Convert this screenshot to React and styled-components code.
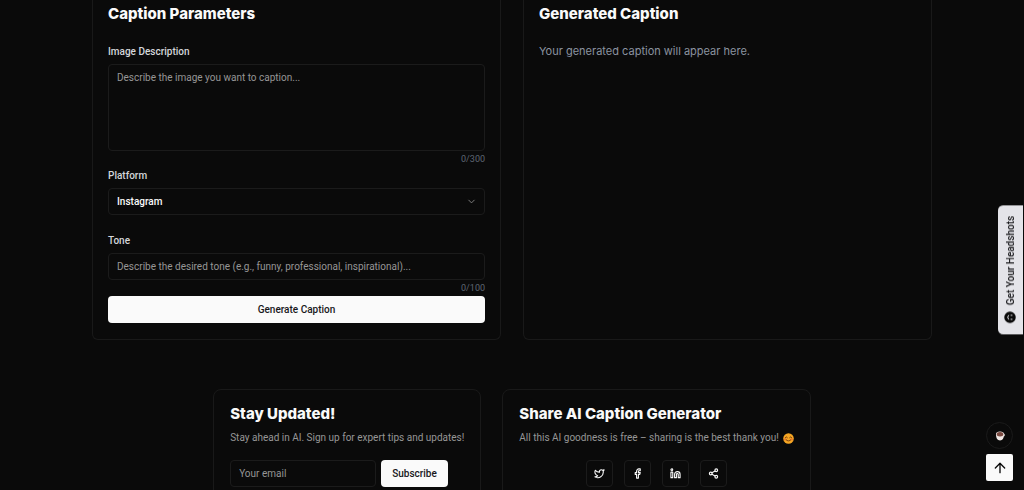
import styled, { createGlobalStyle } from "styled-components";
import { ArrowUp, ChevronDown, Facebook, Linkedin, Share2, Twitter } from "lucide-react";

const GlobalStyle = createGlobalStyle`
* {
  box-sizing: border-box;
}

body {
  margin: 0;
  overflow: hidden;
  background: #0a0a0a;
  color: #fafafa;
  font-family: Roboto, Inter, sans-serif;
  font-size: 10px;
}

h2, p {
  margin: 0;
}

button, input, select, textarea {
  font: inherit;
}
`;

const shareLinks = [
  { name: "Twitter", Icon: Twitter },
  { name: "Facebook", Icon: Facebook },
  { name: "LinkedIn", Icon: Linkedin },
  { name: "Copy link", Icon: Share2 },
];

const Smile = () => (
  <Emoji viewBox="0 0 24 24" role="img" aria-label="smiling face">
    <circle cx="12" cy="12" r="11.5" fill="#f5a623" />
    <g fill="none" stroke="#6b3410" strokeWidth="2" strokeLinecap="round">
      <path d="M5 10q2-3.5 4.5 0M14.5 10q2.5-3.5 4.5 0" />
      <path d="M6.5 14.5q5.500 6 11 0" />
    </g>
    <circle cx="4.5" cy="14" r="2.5" fill="#ee6b2f" opacity="0.7" />
    <circle cx="19.5" cy="14" r="2.5" fill="#ee6b2f" opacity="0.7" />
  </Emoji>
);

const CaptionForm = () => {
  return (
    <Panel as="form" onSubmit={(e) => e.preventDefault()}>
      <Title>Caption Parameters</Title>
      <Fields>
        <Field>
          <Label htmlFor="description">Image Description</Label>
          <TextArea id="description" maxLength={300} placeholder="Describe the image you want to caption..." />
          <Counter>0/300</Counter>
        </Field>
        <Field $space="5px">
          <Label htmlFor="platform">Platform</Label>
          <SelectBox>
            <Select id="platform" defaultValue="Instagram">
              <option>Instagram</option>
              <option>Facebook</option>
              <option>LinkedIn</option>
            </Select>
            <ChevronDown size={11} />
          </SelectBox>
        </Field>
        <Field $space="20px">
          <Label htmlFor="tone">Tone</Label>
          <Input
            id="tone"
            maxLength={100}
            placeholder="Describe the desired tone (e.g., funny, professional, inspirational)..."
          />
          <Counter>0/100</Counter>
        </Field>
        <Button type="submit">Generate Caption</Button>
      </Fields>
    </Panel>
  );
};

const App = () => {
  return (
    <>
      <GlobalStyle />
      <Main>
        <Panels>
          <CaptionForm />
          <Panel>
            <Title>Generated Caption</Title>
            <Result>Your generated caption will appear here.</Result>
          </Panel>
        </Panels>

        <Cards>
          <Card>
            <Title>Stay Updated!</Title>
            <Text>Stay ahead in AI. Sign up for expert tips and updates!</Text>
            <Subscribe onSubmit={(e) => e.preventDefault()}>
              <Input type="email" aria-label="Your email" placeholder="Your email" />
              <Button type="submit">Subscribe</Button>
            </Subscribe>
          </Card>
          <Card>
            <Title>Share AI Caption Generator</Title>
            <Text>
              All this AI goodness is free – sharing is the best thank you! <Smile />
            </Text>
            <ShareRow>
              {shareLinks.map(({ name, Icon }) => (
                <IconButton key={name} type="button" aria-label={name}>
                  <Icon size={11} strokeWidth={2.4} />
                </IconButton>
              ))}
            </ShareRow>
          </Card>
        </Cards>
      </Main>

      <SideTab href="#headshots">
        <svg width="12" height="12" viewBox="0 0 24 24" aria-hidden="true">
          <circle cx="12" cy="12" r="11.5" fill="#0a0a0a" />
          <g fill="none" stroke="#e4e4e9" strokeWidth="2" strokeLinecap="round">
            <path d="M10 8h-2M10 16h-2M15 8q4 4 0 8" />
          </g>
        </svg>
        Get Your Headshots
      </SideTab>

      <Floating>
        <CoffeeLink href="#coffee" aria-label="Buy a coffee">
          <svg width="10" height="10" viewBox="0 0 20 20" aria-hidden="true">
            <path d="M2 6q0 13 8 13t8-13z" fill="#f1e9e6" />
            <circle cx="17.5" cy="8" r="2" fill="none" stroke="#f1e9e6" strokeWidth="1.5" />
            <ellipse cx="10" cy="6" rx="8" ry="5" fill="#f1e9e6" />
            <ellipse cx="10" cy="6.5" rx="6.5" ry="4.5" fill="#7a4a41" />
          </svg>
        </CoffeeLink>
        <TopButton type="button" aria-label="Back to top">
          <ArrowUp size={16} />
        </TopButton>
      </Floating>
    </>
  );
};

const Main = styled.main`
  display: flex;
  flex-direction: column;
  gap: 49px;
`;

const Panels = styled.div`
  display: grid;
  grid-template-columns: 1fr 1fr;
  gap: 22px;
  width: 84%;
  max-width: 840px;
  margin: 0 auto;
`;

const Panel = styled.section`
  padding: 4px 15px 16px;
  border: 1px solid #191919;
  border-top: 0;
  border-radius: 0 0 6px 6px;
`;

const Title = styled.h2`
  font-family: Inter, sans-serif;
  font-size: 15px;
  font-weight: 800;
  line-height: 20px;
`;

const Fields = styled.div`
  display: flex;
  flex-direction: column;
  margin-top: 22px;
`;

const Field = styled.div`
  display: flex;
  flex-direction: column;
  margin-top: ${({ $space }) => $space || 0};
`;

const Label = styled.label`
  margin-bottom: 6px;
  color: #d4d6da;
  font-weight: 500;
  line-height: 12px;
`;

const Input = styled.input`
  width: 100%;
  min-width: 0;
  height: 27px;
  padding: 0 8px;
  border: 1px solid #1b1b1b;
  border-radius: 4px;
  background: transparent;
  color: #fafafa;

  &::placeholder {
    color: #969696;
    opacity: 1;
  }
`;

const TextArea = styled(Input).attrs({ as: "textarea" })`
  display: block;
  height: 87px;
  padding: 6px 8px;
  line-height: 14px;
  resize: none;
`;

const SelectBox = styled.div`
  display: grid;
  align-items: center;

  > * {
    grid-area: 1 / 1;
  }

  svg {
    justify-self: end;
    margin-right: 8px;
    color: #858585;
    pointer-events: none;
  }
`;

const Select = styled(Input).attrs({ as: "select" })`
  appearance: none;
  font-weight: 500;
`;

const Counter = styled.span`
  margin-top: 2px;
  color: #5f6673;
  font-size: 9px;
  line-height: 12px;
  text-align: right;
`;

const Button = styled.button`
  height: 27px;
  padding: 0 11px;
  border: 0;
  border-radius: 4px;
  background: #fafafa;
  color: #18181b;
  font-weight: 500;
  cursor: pointer;

  ${Fields} & {
    margin-top: 2px;
  }
`;

const Result = styled.p`
  margin-top: 19px;
  color: #8b93a0;
  font-family: Inter, sans-serif;
  font-size: 11px;
  line-height: 16px;
`;

const Cards = styled.div`
  display: flex;
  justify-content: center;
  gap: 21px;
`;

const Card = styled.section`
  padding: 14px 16px 16px;
  border: 1px solid #191919;
  border-radius: 8px;
`;

const Text = styled.p`
  display: flex;
  align-items: center;
  gap: 4px;
  margin-top: 7px;
  color: #969696;
  line-height: 14px;
`;

const Emoji = styled.svg`
  width: 11px;
  height: 11px;
`;

const Subscribe = styled.form`
  display: flex;
  gap: 5px;
  margin-top: 15px;

  input {
    width: 146px;
  }
`;

const ShareRow = styled.div`
  display: flex;
  justify-content: center;
  gap: 11px;
  margin-top: 15px;
`;

const IconButton = styled.button`
  display: grid;
  place-items: center;
  width: 27px;
  height: 27px;
  padding: 0;
  border: 1px solid #1b1b1b;
  border-radius: 4px;
  background: transparent;
  color: #fafafa;
  cursor: pointer;
`;

const SideTab = styled.a`
  position: fixed;
  top: 205px;
  right: 1px;
  display: flex;
  align-items: center;
  gap: 6px;
  width: 25px;
  padding: 11px 0;
  border-radius: 0 5px 5px 0;
  background: #e4e4e9;
  color: #18181b;
  font-weight: 500;
  line-height: 25px;
  text-decoration: none;
  writing-mode: vertical-rl;
  transform: rotate(180deg);
`;

const Floating = styled.div`
  position: fixed;
  right: 11px;
  bottom: 9px;
  display: flex;
  flex-direction: column;
  gap: 5px;
`;

const CoffeeLink = styled.a`
  display: grid;
  place-items: center;
  width: 27px;
  height: 27px;
  border: 1px solid #1b1b1b;
  border-radius: 50%;
`;

const TopButton = styled.button`
  display: grid;
  place-items: center;
  width: 27px;
  height: 27px;
  padding: 0;
  border: 0;
  border-radius: 2px;
  background: #fafafa;
  color: #0a0a0a;
  cursor: pointer;
`;

export default App;
